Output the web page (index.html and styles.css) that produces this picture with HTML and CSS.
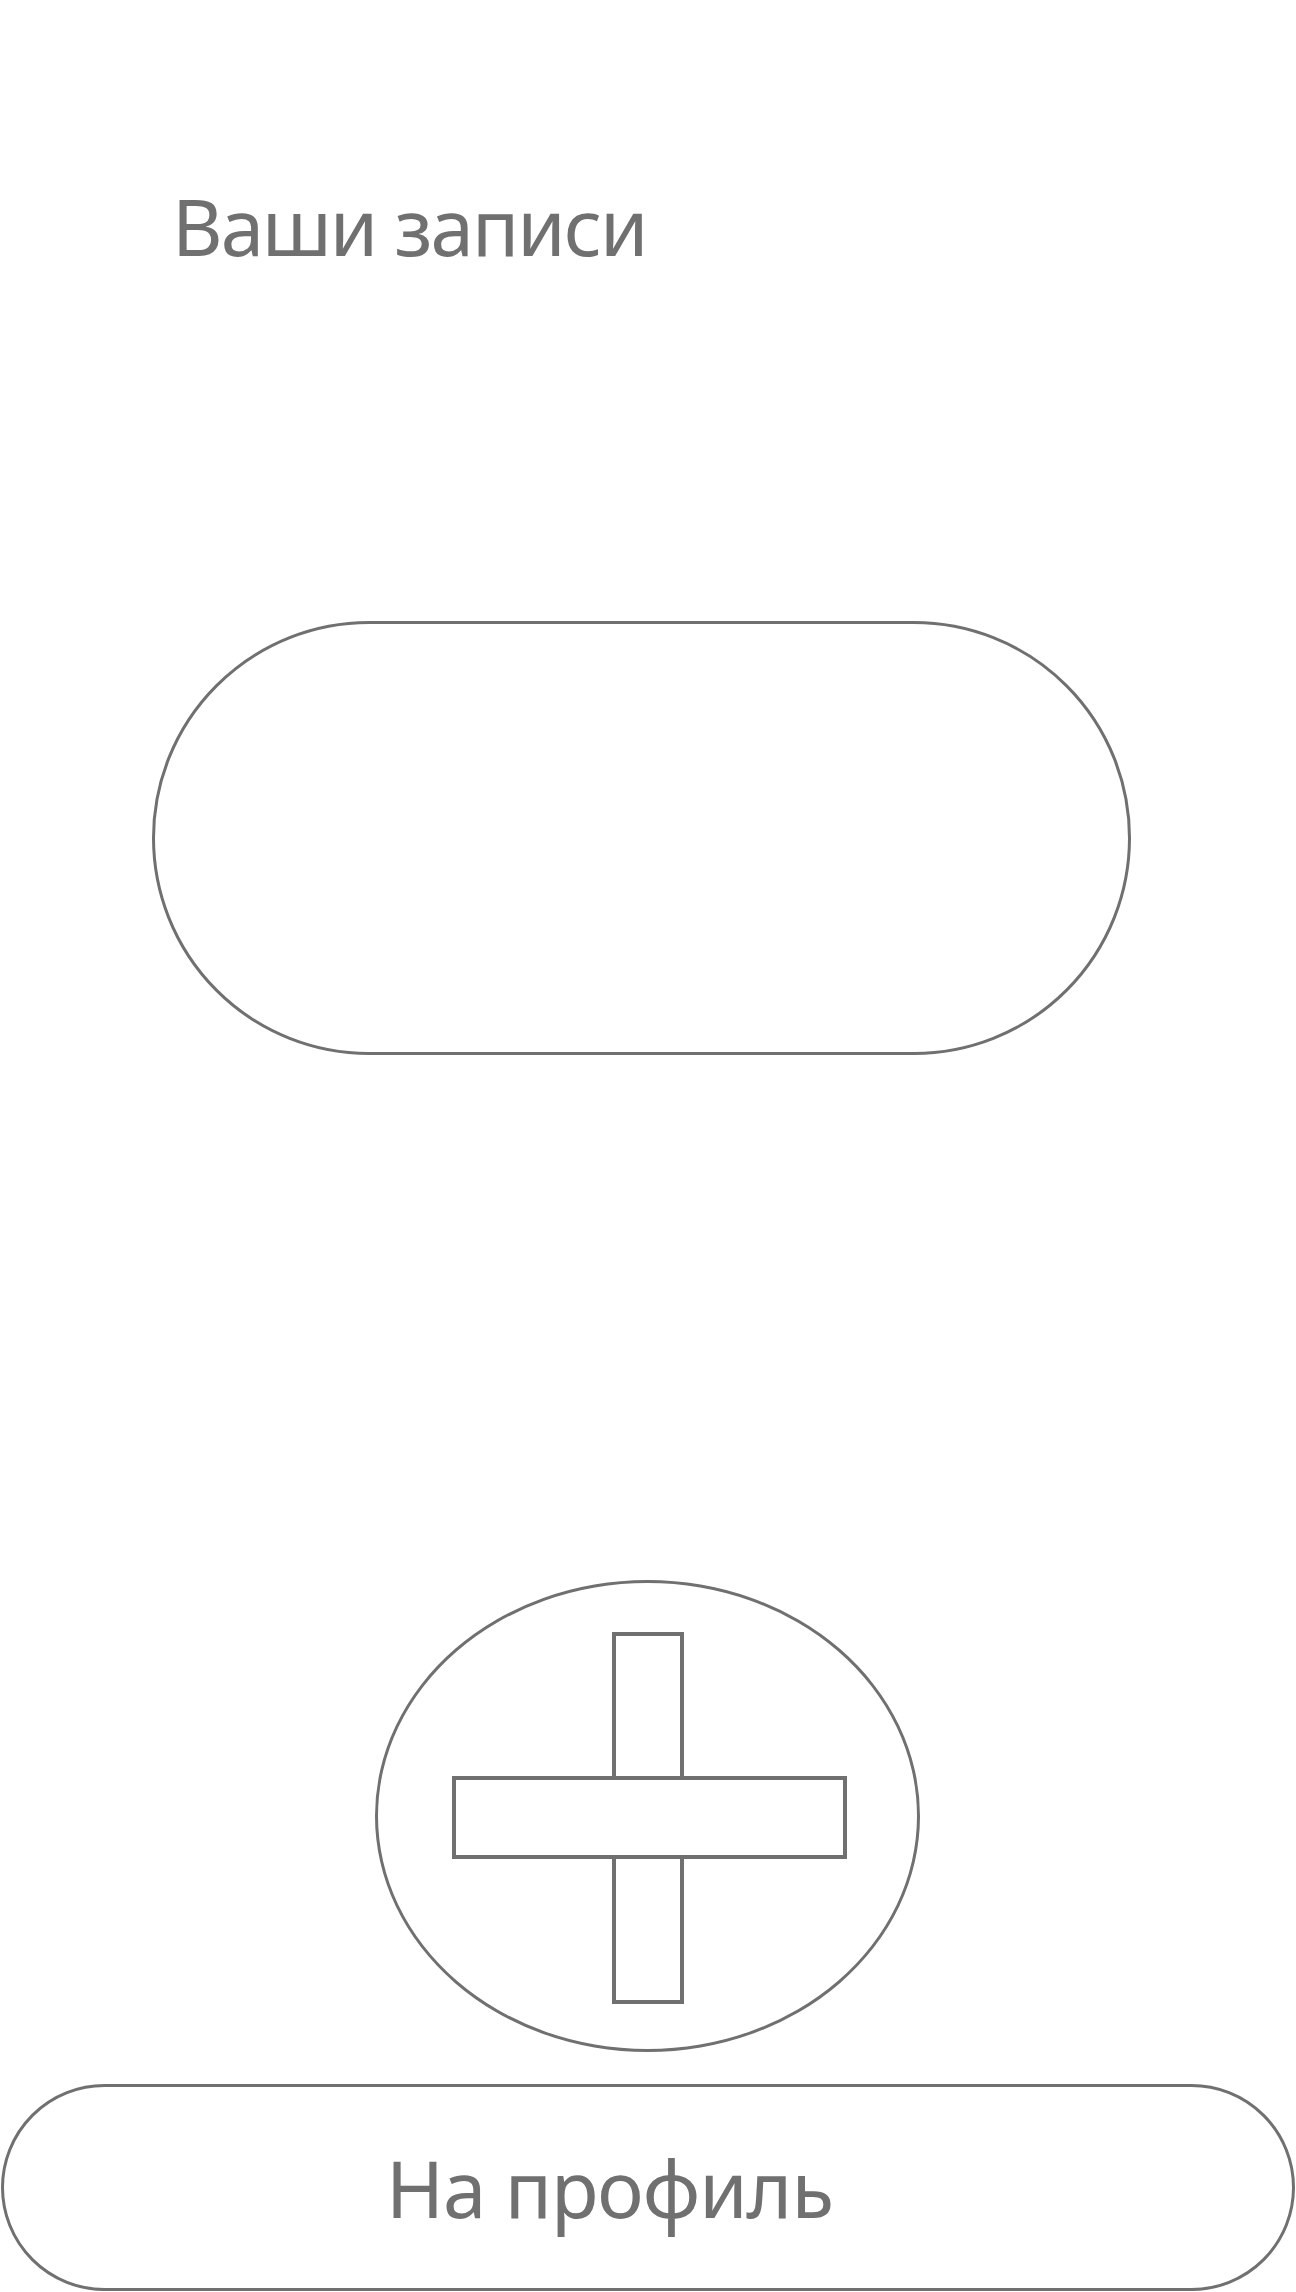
FILE: index.html
```html
<!DOCTYPE html>
<html lang="ru">
<head>
<meta charset="utf-8">
<title>Ваши записи</title>
<link rel="stylesheet" href="styles.css">
</head>
<body>
<div class="page">
  <h1 class="title">Ваши записи</h1>
  <div class="entries"></div>
  <button class="add" type="button" aria-label="Добавить запись">
    <svg class="plus" width="395" height="372" viewBox="0 0 395 372">
      <rect x="162" y="2" width="68" height="368" fill="#fff" stroke="#707070" stroke-width="4"/>
      <rect x="2" y="146" width="391" height="79" fill="#fff" stroke="#707070" stroke-width="4"/>
    </svg>
  </button>
  <button class="profile" type="button">На профиль</button>
</div>
</body>
</html>
```
FILE: styles.css
```css
body {
  margin: 0;
  background: #ffffff;
  font-family: "Noto Sans", "Open Sans", sans-serif;
  color: #707070;
}

.page {
  width: 1296px;
  height: 2292px;
  display: flex;
  flex-direction: column;
  align-items: flex-start;
}

.title {
  margin: 0;
  padding: 179px 0 0 172px;
  font-size: 78px;
  line-height: 94px;
  font-weight: 400;
  letter-spacing: -2px;
  color: #707070;
}

.entries {
  margin-top: 348px;
  margin-left: 152px;
  width: 979px;
  height: 434px;
  box-sizing: border-box;
  border: 3px solid #707070;
  border-radius: 217px;
  background: #fff;
}

.add {
  margin-top: 525px;
  margin-left: 375px;
  width: 545px;
  height: 472px;
  box-sizing: border-box;
  border: 3px solid #707070;
  border-radius: 50%;
  background: #fff;
  padding: 0;
  display: flex;
  align-items: center;
  justify-content: center;
  cursor: pointer;
}

.plus {
  display: block;
  margin: 4px 0 0 4px;
}

.profile {
  margin-top: 32px;
  margin-left: 1px;
  width: 1294px;
  height: 207px;
  box-sizing: border-box;
  border: 3px solid #707070;
  border-radius: 104px;
  background: #fff;
  padding: 0 77px 0 0;
  display: flex;
  align-items: center;
  justify-content: center;
  font-family: "Noto Sans", "Open Sans", sans-serif;
  font-size: 78px;
  font-weight: 400;
  letter-spacing: -1px;
  color: #707070;
  cursor: pointer;
}
```
